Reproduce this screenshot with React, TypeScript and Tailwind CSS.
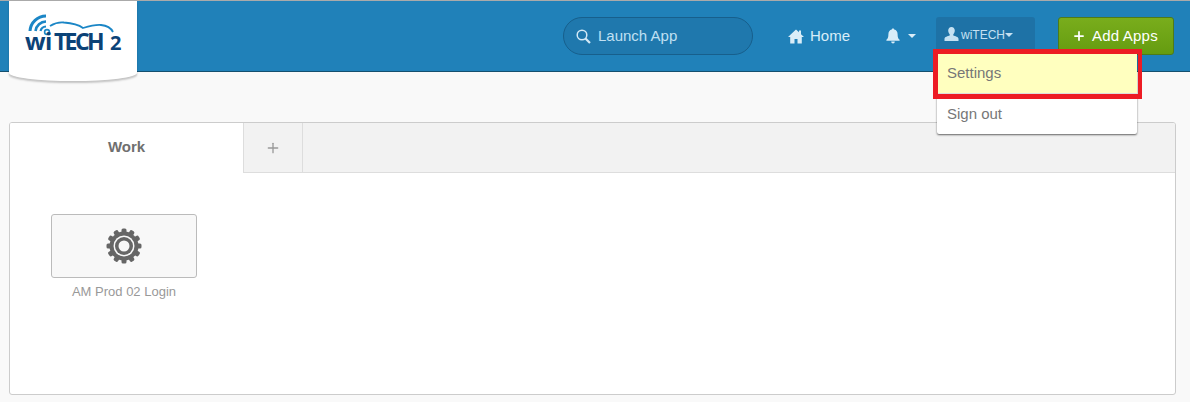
import { Plus } from "lucide-react";

const sans = "font-['Liberation_Sans',Arial,sans-serif]";

function Logo() {
  return (
    <div className="relative w-[128px] h-[80px] bg-white shrink-0 rounded-b-[64px_8px] shadow-[0_2px_2px_rgba(0,0,0,0.22)]">
      <svg className="absolute left-0 top-0" width="128" height="50" viewBox="0 0 128 50" fill="none">
        {/* wifi arcs */}
        <circle cx="38" cy="31" r="2.4" stroke="#1b86c6" strokeWidth="1.6" />
        <path d="M21 30 A 16 16 0 0 1 37 15" stroke="#1b86c6" strokeWidth="3" />
        <path d="M26.500 30 A 11 11 0 0 1 37 20.500" stroke="#1b86c6" strokeWidth="2.6" />
        <path d="M31.500 30 A 6 6 0 0 1 37 25.500" stroke="#1b86c6" strokeWidth="2.2" />
        {/* car outline */}
        <path
          d="M41 25 C 46 22 50 21 55 21.500 C 62 22 70 24 74 27 C 79 25.500 86 23.500 92 24 C 98 24.500 102 27 104 31"
          stroke="#1b86c6"
          strokeWidth="1.8"
        />
      </svg>
      <div className="absolute left-[16px] top-[27px] flex items-baseline text-[#0b4277] font-['Open_Sans',sans-serif] font-bold leading-[26px]">
        <span className="text-[24px] tracking-[-0.5px]">wi</span>
        <span className="text-[23px] ml-[2px] tracking-[-2.6px]">TECH</span>
        <span className="text-[20px] ml-[8px]">2</span>
      </div>
    </div>
  );
}

function GearIcon() {
  const teeth = [0, 30, 60, 90, 120, 150, 180, 210, 240, 270, 300, 330];
  return (
    <svg width="36" height="36" viewBox="0 0 36 36">
      {teeth.map((a) => (
        <rect key={a} x="15.5" y="0.5" width="5" height="6" rx="1.5" fill="#666" transform={`rotate(${a} 18 18)`} />
      ))}
      <circle cx="18" cy="18" r="14.5" fill="#666" />
      <circle cx="18" cy="18" r="10.5" fill="#f8f8f8" />
      <circle cx="18" cy="18" r="9" fill="#666" />
      <circle cx="18" cy="18" r="5.5" fill="#f8f8f8" />
    </svg>
  );
}

function SearchIcon() {
  return (
    <svg width="15" height="15" viewBox="0 0 15 15" fill="none" stroke="#d3e9f6">
      <circle cx="6" cy="6" r="4.800" strokeWidth="1.500" />
      <path d="M9.500 9.500 L14 14" strokeWidth="2.200" />
    </svg>
  );
}

function HomeIcon() {
  return (
    <svg width="16" height="15" viewBox="0 0 16 15" fill="#d9edf8">
      <path d="M8 0.500 L11 3.300 V1.500 H13 V5.200 L16 8 H13.800 V14.500 H9.500 V10 H6.500 V14.500 H2.200 V8 H0 Z" />
    </svg>
  );
}

function BellIcon() {
  return (
    <svg width="16" height="16" viewBox="0 0 16 16" fill="#d9edf8">
      <path d="M8 0.500c.8 0 1.200.5 1.200 1.100 2.300.5 3.400 2.300 3.400 4.600 0 3 .6 4.400 2 5.600v1H1.400v-1c1.400-1.200 2-2.600 2-5.600 0-2.300 1.100-4.100 3.400-4.600C6.800 1 7.200.5 8 .5z" />
      <path d="M6.200 13.500h3.600c0 1.100-.8 2-1.800 2s-1.800-.9-1.800-2z" />
    </svg>
  );
}

function UserIcon() {
  return (
    <svg width="15" height="14" viewBox="0 0 15 14" fill="#c5e1f2">
      <path d="M7.500 0c2 0 3.300 1.500 3.300 3.600 0 1.500-.6 2.800-1.500 3.600v1.300c1.800.6 5.200 1.500 5.200 3.300V14H.5v-2.200c0-1.800 3.400-2.700 5.200-3.300V7.200C4.800 6.400 4.200 5.100 4.200 3.600 4.200 1.500 5.500 0 7.500 0z" />
    </svg>
  );
}

function Caret({ color }: { color: string }) {
  return <span className={`inline-block w-0 h-0 border-x-4 border-x-transparent border-t-4 ${color}`} />;
}

export default function App() {
  return (
    <div className={`w-[1190px] h-[402px] overflow-hidden bg-[#f9f9f9] ${sans}`}>
      <header className="relative h-[72px] border-t border-t-[#aaaaaa] border-b border-b-[#15506f] bg-[#2081b9] flex items-start">
        <div className="ml-[9px] z-10 -mt-px pt-px">
          <Logo />
        </div>

        <div className="ml-[426px] mt-[16px] w-[190px] h-[38px] rounded-[19px] border border-[#175f8c] bg-[#1f78ad] flex items-center pl-[12px] text-[#c0e0f3] text-[15px]">
          <SearchIcon />
          <span className="ml-[7px]">Launch App</span>
        </div>

        <div className="ml-[35px] mt-[16px] h-[38px] flex items-center text-[#d9edf8] text-[15px]">
          <HomeIcon />
          <span className="ml-[6px]">Home</span>
        </div>

        <div className="ml-[35px] mt-[16px] h-[38px] flex items-center">
          <BellIcon />
          <span className="ml-[7px] flex">
            <Caret color="border-t-[#d9edf8]" />
          </span>
        </div>

        <div className="ml-[20px] mt-[16px] w-[99px] h-[36px] rounded-t-[3px] bg-[#1e72a6] flex items-start pt-[10px] pl-[8px] text-[#c5e1f2] text-[12px] leading-[16px]">
          <UserIcon />
          <span className="ml-[2px]">wiTECH</span>
          <span className="flex mt-[6px]">
            <Caret color="border-t-[#c5e1f2]" />
          </span>
        </div>

        <div className="ml-[23px] mt-[16px] w-[116px] h-[38px] rounded-[3px] border border-[#4d7a1a] bg-gradient-to-b from-[#79ad1c] to-[#659c10] flex items-center pl-[13px] text-white text-[15px]">
          <Plus size={14} strokeWidth={3} />
          <span className="ml-[6px] tracking-[0.2px]">Add Apps</span>
        </div>

        {/* user dropdown with callout */}
        <div className="absolute left-[937px] top-[49px] w-[200px] bg-white rounded-b-[2px] shadow-[0_1px_2px_rgba(0,0,0,0.6)] z-20 text-[15px] text-[#777777]">
          <div className="h-[44px] pt-[4px] bg-[#ffffbf] border-b border-b-[#dddddd] flex items-center pl-[10px]">Settings</div>
          <div className="h-[40px] flex items-center pl-[10px]">Sign out</div>
        </div>
        <div className="absolute left-[933px] top-[48px] w-[209px] h-[50px] border-[5px] border-r-[4px] border-[#ed1c24] z-30" />
      </header>

      <main className="pt-[50px] px-[9px]">
        <div className="w-[1167px] h-[273px] bg-white border border-[#cccccc] rounded-[3px] overflow-hidden">
          <div className="h-[50px] flex bg-[#f2f2f2]">
            <div className="w-[233px] bg-white flex items-center justify-center text-[15px] font-bold text-[#6f6f6f] pb-[2px]">
              Work
            </div>
            <div className="w-[60px] border-l border-r border-b border-[#dddddd] flex items-center justify-center text-[#999999]">
              <Plus size={16} strokeWidth={2} />
            </div>
            <div className="flex-1 border-b border-[#dddddd]" />
          </div>
          <div className="pt-[41px] pl-[41px]">
            <div className="w-[146px]">
              <div className="h-[64px] rounded-[3px] border border-[#bbbbbb] bg-[#f8f8f8] flex items-center justify-center">
                <GearIcon />
              </div>
              <div className="mt-[6px] text-center text-[13px] leading-[16px] text-[#999999]">AM Prod 02 Login</div>
            </div>
          </div>
        </div>
      </main>
    </div>
  );
}
